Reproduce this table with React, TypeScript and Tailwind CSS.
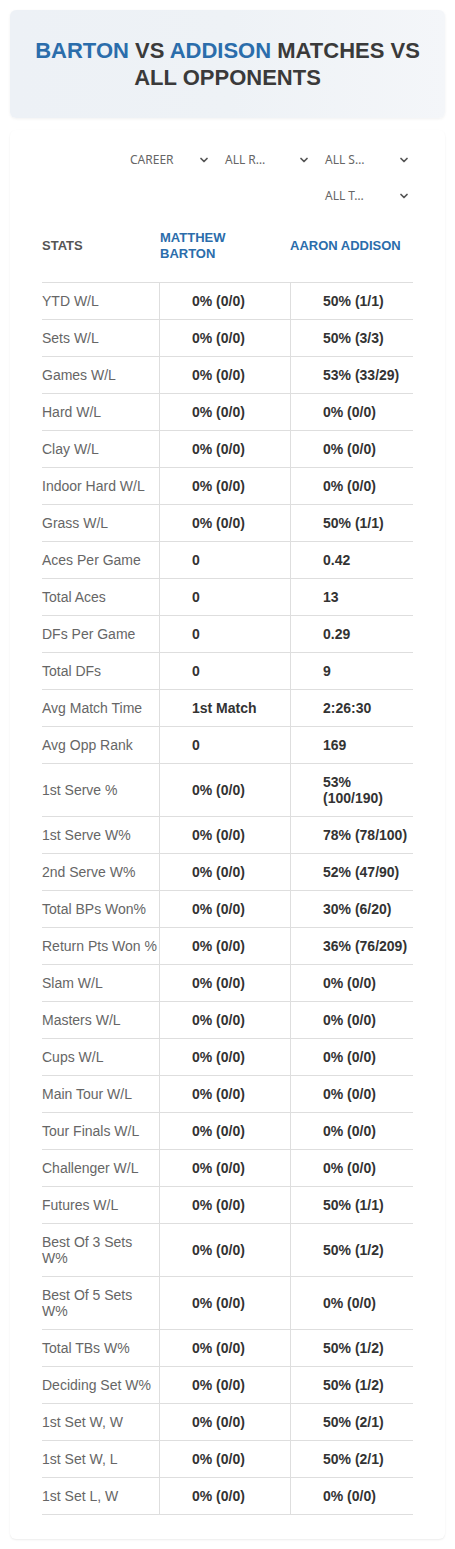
import React from "react";
import { ChevronDown } from "lucide-react";

const rows: [string, string, string][] = [
  ["YTD W/L", "0% (0/0)", "50% (1/1)"],
  ["Sets W/L", "0% (0/0)", "50% (3/3)"],
  ["Games W/L", "0% (0/0)", "53% (33/29)"],
  ["Hard W/L", "0% (0/0)", "0% (0/0)"],
  ["Clay W/L", "0% (0/0)", "0% (0/0)"],
  ["Indoor Hard W/L", "0% (0/0)", "0% (0/0)"],
  ["Grass W/L", "0% (0/0)", "50% (1/1)"],
  ["Aces Per Game", "0", "0.42"],
  ["Total Aces", "0", "13"],
  ["DFs Per Game", "0", "0.29"],
  ["Total DFs", "0", "9"],
  ["Avg Match Time", "1st Match", "2:26:30"],
  ["Avg Opp Rank", "0", "169"],
  ["1st Serve %", "0% (0/0)", "53% (100/190)"],
  ["1st Serve W%", "0% (0/0)", "78% (78/100)"],
  ["2nd Serve W%", "0% (0/0)", "52% (47/90)"],
  ["Total BPs Won%", "0% (0/0)", "30% (6/20)"],
  ["Return Pts Won %", "0% (0/0)", "36% (76/209)"],
  ["Slam W/L", "0% (0/0)", "0% (0/0)"],
  ["Masters W/L", "0% (0/0)", "0% (0/0)"],
  ["Cups W/L", "0% (0/0)", "0% (0/0)"],
  ["Main Tour W/L", "0% (0/0)", "0% (0/0)"],
  ["Tour Finals W/L", "0% (0/0)", "0% (0/0)"],
  ["Challenger W/L", "0% (0/0)", "0% (0/0)"],
  ["Futures W/L", "0% (0/0)", "50% (1/1)"],
  ["Best Of 3 Sets W%", "0% (0/0)", "50% (1/2)"],
  ["Best Of 5 Sets W%", "0% (0/0)", "0% (0/0)"],
  ["Total TBs W%", "0% (0/0)", "50% (1/2)"],
  ["Deciding Set W%", "0% (0/0)", "50% (1/2)"],
  ["1st Set W, W", "0% (0/0)", "50% (2/1)"],
  ["1st Set W, L", "0% (0/0)", "50% (2/1)"],
  ["1st Set L, W", "0% (0/0)", "0% (0/0)"],
];

const Select = ({ label, width }: { label: string; width: string }) => (
  <div className={`flex items-center justify-between h-6 ${width}`}>
    <span className="text-[12px] text-[#666] font-['Noto_Sans',sans-serif]">{label}</span>
    <ChevronDown className="w-3 h-3 mr-[3px] text-[#555]" strokeWidth={3.5} />
  </div>
);

const App = () => {
  return (
    <div className="min-h-[1549px] bg-white px-[10px] pt-[10px] font-['Liberation_Sans',Arial,sans-serif]">
      <div className="rounded-md bg-gradient-to-r from-[#edf1f6] via-[#eef2f6] to-[#f4f6f9] shadow-[0_1px_3px_rgba(0,0,0,0.06)] px-4 py-[27px]">
        <h1 className="text-center text-[22px] font-bold leading-[27px] text-[#3a3a3a]">
          <span className="text-[#2b6dab]">BARTON</span> VS{" "}
          <span className="text-[#2b6dab]">ADDISON</span> MATCHES VS ALL OPPONENTS
        </h1>
      </div>

      <div className="mt-[12px] rounded-md bg-white shadow-[0_1px_2px_rgba(0,0,0,0.08)] px-8 pt-[18px] pb-[24px]">
        <div className="flex flex-wrap justify-end gap-x-3 gap-y-3">
          <Select label="CAREER" width="w-[83px]" />
          <Select label="ALL R…" width="w-[88px]" />
          <Select label="ALL S…" width="w-[88px]" />
          <Select label="ALL T…" width="w-[88px]" />
        </div>

        <div className="mt-[17px] grid grid-cols-[117px_131px_123px]">
          <div className="h-[41px] flex items-center text-[13px] font-bold text-[#555] leading-4">STATS</div>
          <div className="h-[41px] flex items-center pl-px text-[13px] font-bold text-[#2b6dab] leading-4">
            MATTHEW
            <br />
            BARTON
          </div>
          <div className="h-[41px] flex items-center text-[13px] font-bold text-[#2b6dab] leading-4">AARON ADDISON</div>
          <div className="col-span-3 h-4" />
          {rows.map(([label, a, b], i) => {
            const last = i === rows.length - 1;
            const rb = `border-t border-[#dedede] ${last ? "border-b" : ""}`;
            return (
              <React.Fragment key={label}>
                <div className={`${rb} py-[10px] flex items-center text-[14px] leading-4 text-[#666]`}>{label}</div>
                <div className={`${rb} border-l py-[10px] pl-8 pr-2 flex items-center text-[14px] leading-4 font-bold text-[#333]`}>{a}</div>
                <div className={`${rb} border-l py-[10px] pl-8 pr-1 flex items-center text-[14px] leading-4 font-bold text-[#333]`}>{b}</div>
              </React.Fragment>
            );
          })}
        </div>
      </div>
    </div>
  );
};

export default App;
